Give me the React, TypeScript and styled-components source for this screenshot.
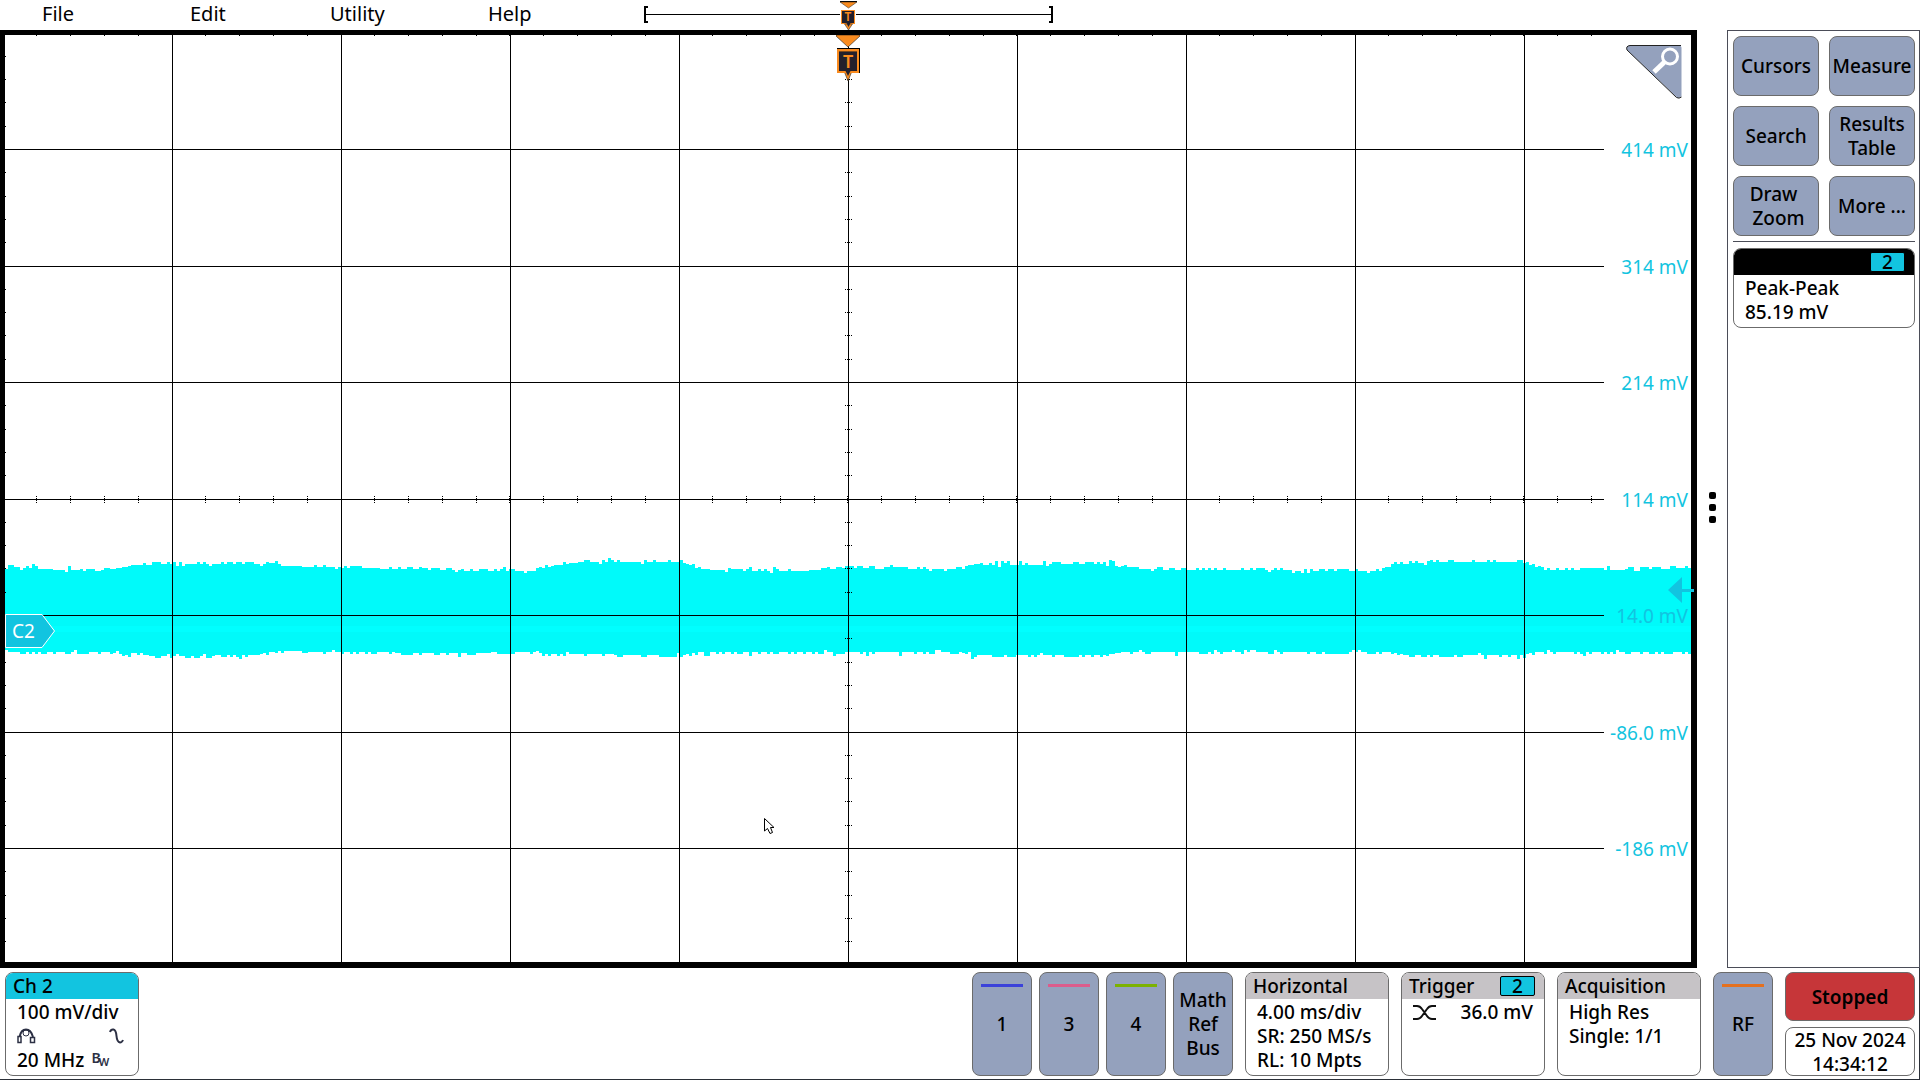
import React from "react";
import styled, { createGlobalStyle } from "styled-components";

const C = {
  channel2: "#12c4e0",
  button: "#94a1bd",
  outline: "#6b6b6b",
  header: "#c6c3c6",
  orange: "#f98b1f",
  ink: "#000000",
};

const GlobalStyle = createGlobalStyle`
  *, *::before, *::after { box-sizing: border-box; }
  body {
    margin: 0;
    background: #fff;
    color: ${C.ink};
    font-family: "Noto Sans", "Open Sans", sans-serif;
    font-size: 19px;
    font-weight: 500;
    line-height: 24px;
  }
  button { font: inherit; color: inherit; margin: 0; padding: 0; cursor: pointer; }
  p, h2 { margin: 0; font: inherit; }
  svg { display: block; }
`;

const Page = styled.div`
  display: grid;
  grid-template-rows: 30px 1fr auto;
  min-height: 100vh;
`;

const columns = "minmax(0, 1fr) 30px 193px";

const TopBar = styled.header`
  display: grid;
  grid-template-columns: ${columns};
`;

const TopMain = styled.div`
  display: grid;
  align-items: start;
  > * { grid-area: 1 / 1; }
`;

const Menu = styled.nav`
  display: flex;
  padding: 2px 0 0 28px;
`;

const MenuButton = styled.button<{ $width: number }>`
  width: ${(p) => p.$width}px;
  padding-left: 14px;
  border: 0;
  background: none;
  text-align: left;
  font-size: 20px;
  font-weight: 400;
  line-height: 24px;
`;

const Overview = styled.svg`
  justify-self: center;
`;

const Body = styled.main`
  display: grid;
  grid-template-columns: ${columns};
`;

const Plot = styled.section`
  position: relative;
  border: 5px solid #000;
  border-right-width: 6px;
  border-bottom-width: 6px;
  font-weight: 400;
`;

const Graticule = styled.svg`
  position: absolute;
  inset: 0;
  width: 100%;
  height: 100%;
`;

const ScaleLabel = styled.span<{ $top: number }>`
  position: absolute;
  right: 3px;
  top: ${(p) => p.$top}%;
  padding-top: 2px;
  transform: translateY(-50%);
  color: ${C.channel2};
`;

const TriggerMarker = styled.svg`
  position: absolute;
  top: 0;
  left: 50%;
  margin-left: -12px;
`;

const FlagLetter = styled.text<{ $size: number }>`
  fill: ${C.orange};
  font-size: ${(p) => p.$size}px;
  font-weight: 600;
  text-anchor: middle;
`;

const ZoomCorner = styled.button`
  position: absolute;
  top: 10px;
  right: 9px;
  border: 0;
  background: none;
`;

const ChannelTag = styled.div`
  position: absolute;
  left: 0;
  top: 64.3%;
  transform: translateY(-50%);
  display: grid;
  align-items: center;
  color: #fff;
  > * { grid-area: 1 / 1; }
  span { padding-left: 7px; }
`;

const LevelArrow = styled.svg`
  position: absolute;
  right: -3px;
  top: 59.9%;
  transform: translateY(-50%);
`;

const Pointer = styled.svg`
  position: absolute;
  left: 45%;
  top: 84.5%;
`;

const DragHandle = styled.button`
  display: flex;
  flex-direction: column;
  align-items: center;
  justify-content: center;
  gap: 5px;
  padding-top: 17px;
  border: 0;
  background: none;
`;

const Dot = styled.span`
  width: 7px;
  height: 7px;
  border-radius: 2px;
  background: #000;
`;

const Sidebar = styled.aside`
  padding: 5px 4px 5px 5px;
  border: 1px solid #4b4d58;
`;

const ButtonGrid = styled.div`
  display: grid;
  grid-template-columns: 1fr 1fr;
  gap: 10px;
  padding-bottom: 5px;
  border-bottom: 1px solid #4b4d58;
`;

const panel = `
  border: 1px solid ${C.outline};
  border-radius: 8px;
`;

const SideButton = styled.button`
  ${panel}
  height: 60px;
  background: ${C.button};
  white-space: pre;
  display: flex;
  align-items: center;
  justify-content: center;
`;

const Card = styled.section<{ $width?: number }>`
  ${panel}
  width: ${(p) => (p.$width ? `${p.$width}px` : "auto")};
  overflow: hidden;
  background: #fff;
`;

const MeasureCard = styled(Card)`
  height: 80px;
  margin-top: 6px;
`;

const CardHeader = styled.header<{ $color: string }>`
  display: flex;
  align-items: center;
  justify-content: space-between;
  height: 26px;
  padding: 0 9px 0 7px;
  background: ${(p) => p.$color};
`;

const Badge = styled.span`
  width: 35px;
  height: 20px;
  margin-left: auto;
  border: 1px solid #000;
  border-radius: 2px;
  background: ${C.channel2};
  line-height: 18px;
  text-align: center;
`;

const CardBody = styled.div`
  padding: 1px 11px 0;
`;

const Line = styled.p`
  display: flex;
  align-items: center;
  min-height: 24px;
  white-space: nowrap;
`;

const SpreadLine = styled(Line)`
  justify-content: space-between;
`;

const BandwidthMark = styled.span`
  display: flex;
  margin-left: 7px;
  color: #2c3044;
  font-size: 14px;
  font-weight: 600;
  line-height: 16px;
  sub { font-size: 11px; line-height: 16px; padding-top: 4px; margin-left: -2px; vertical-align: baseline; }
`;

const Footer = styled.footer`
  display: flex;
  justify-content: space-between;
  padding: 4px 4px 3px 5px;
  border-right: 1px solid #2b3038;
  border-bottom: 1px solid #2b3038;
`;

const Settings = styled.div`
  display: flex;
  gap: 12px;
  height: 104px;
`;

const SourceButtons = styled.div`
  display: flex;
  gap: 7px;
`;

const SourceButton = styled.button`
  ${panel}
  width: 60px;
  display: grid;
  grid-template-rows: 14px 1fr 14px;
  justify-items: center;
  align-items: center;
  background: ${C.button};
`;

const Stripe = styled.span<{ $color: string }>`
  align-self: end;
  width: 42px;
  height: 3px;
  background: ${(p) => p.$color};
`;

const SourceName = styled.span`
  grid-row: 2;
`;

const RunColumn = styled.div`
  display: grid;
  grid-template-rows: 49px 49px;
  gap: 6px;
  width: 130px;
`;

const StatusButton = styled.button`
  ${panel}
  background: #c63639;
  font-weight: 600;
`;

const Clock = styled.time`
  ${panel}
  display: block;
  text-align: center;
  white-space: nowrap;
`;

/* Envelope of the channel 2 trace, as [x, y] corner points. */
const TOP: [number, number][] = [
  [5, 567], [30, 568], [60, 570], [95, 571], [120, 568], [130, 565], [172, 564], [265, 564],
  [280, 566], [320, 567], [400, 569], [480, 571], [532, 571], [550, 566], [580, 562], [640, 562],
  [680, 562], [690, 565], [697, 569], [740, 571], [800, 571], [850, 568], [900, 569], [960, 569],
  [980, 565], [1110, 564], [1125, 569], [1200, 570], [1380, 571], [1395, 564], [1440, 562],
  [1520, 562], [1545, 570], [1600, 570], [1691, 568],
];
const BOTTOM: [number, number][] = [
  [5, 652], [110, 652], [125, 655], [172, 656], [255, 655], [275, 651], [340, 652], [450, 653],
  [530, 652], [545, 654], [680, 655], [700, 652], [850, 652], [960, 652], [970, 655], [1100, 655],
  [1125, 652], [1390, 652], [1405, 655], [1520, 655], [1535, 652], [1691, 652],
];

function levelAt(points: [number, number][], x: number) {
  for (let i = 1; i < points.length; i++) {
    const [x0, y0] = points[i - 1];
    const [x1, y1] = points[i];
    if (x <= x1) return y0 + ((y1 - y0) * (x - x0)) / (x1 - x0);
  }
  return points[points.length - 1][1];
}

function edge(points: [number, number][], seed: number, up: number) {
  let state = seed;
  const out: string[] = [];
  for (let x = 5; x < 1691; x += 3) {
    state = (state * 16807) % 2147483647;
    const r = state / 2147483647;
    const noise = r > 0.98 ? 4 : r > 0.64 ? 2 : r < 0.04 ? -2 : 0;
    const y = Math.round(levelAt(points, x) + up * noise);
    out.push(`${x} ${y}`, `${Math.min(x + 3, 1691)} ${y}`);
  }
  return out;
}

const TRACE = `M${edge(TOP, 4211, -1).join("L")}L${edge(BOTTOM, 977, 1).reverse().join("L")}Z`;

const verticals = [172, 341, 510, 679, 848, 1017, 1186, 1355, 1524];
const horizontals = [149, 266, 382, 499, 615, 732, 848];
const minorX = Array.from({ length: 49 }, (_, i) => Math.floor(3 + 33.8 * (i + 1)));
const minorY = Array.from({ length: 39 }, (_, i) => Math.floor(33 + 23.3 * (i + 1)));

function Grid() {
  return (
    <Graticule viewBox="5 35 1686 927" preserveAspectRatio="none" aria-hidden="true">
      <path d={TRACE} fill="#00fafa" />
      <rect x="5" y="626" width="1686" height="6" fill="#00ffff" />
      <g fill="#000" shapeRendering="crispEdges">
        {verticals.map((x) => (
          <rect key={x} x={x} y="35" width="1" height="927" />
        ))}
        {horizontals.map((y) => (
          <rect key={y} x="5" y={y} width="1599" height="1" />
        ))}
        {minorX.filter((x) => x < 1604).map((x) => (
          <path key={x} d={`M${x} 35h1v1h-1zM${x} 496h1v1h-1zM${x} 498h1v3h-1zM${x} 502h1v1h-1z`} />
        ))}
        {minorY.map((y) => (
          <path key={y} d={`M5 ${y}h1v1h-1zM845 ${y}h1v1h-1zM847 ${y}h3v1h-3zM851 ${y}h1v1h-1z`} />
        ))}
      </g>
    </Graticule>
  );
}

const labels: [string, number][] = [
  ["414 mV", 149], ["314 mV", 266], ["214 mV", 382], ["114 mV", 499],
  ["14.0 mV", 615], ["-86.0 mV", 732], ["-186 mV", 848],
];

function TimeOverview() {
  return (
    <Overview width="409" height="30" viewBox="0 0 409 30" aria-hidden="true">
      <g shapeRendering="crispEdges">
        <path d="M0 6h4v2h-2v13h2v2h-4zM409 6h-4v2h2v13h-2v2h4z" />
        <path d="M2 14h194v1h-194zM212 14h195v1h-195z" />
        <path d="M196 1h17v1h-17z" />
        <path d="M197 10h14v14h-14z" fill={C.orange} />
        <path d="M198 11h12v12h-12z" fill="#221f2b" />
      </g>
      <FlagLetter x="204" y="21" $size={12}>T</FlagLetter>
      <path d="M196 2h17l-8.500 6z" fill={C.orange} stroke="#222" strokeWidth=".5" />
      <path d="M200.500 24h8l-4 6z" fill={C.orange} stroke="#222" strokeWidth=".5" />
      <path d="M202.500 23h4l-2 4z" fill="#221f2b" />
    </Overview>
  );
}

function TriggerFlag() {
  return (
    <TriggerMarker width="24" height="47" viewBox="0 0 24 47" aria-hidden="true">
      <path d="M0 0h24v1L12 12L0 1z" fill={C.orange} stroke="#222" strokeWidth=".6" />
      <path d="M8 36l4 10l4-10z" fill={C.orange} stroke="#222" strokeWidth=".6" />
      <g shapeRendering="crispEdges">
        <path d="M1 13h23v25h-1v-24h-22z" />
        <path d="M1 14h22v24h-22z" fill={C.orange} />
        <path d="M3 16h18v20h-18z" fill="#221f2b" />
        <path d="M3 16h18v1h-18z" fill="#7c4a1e" />
      </g>
      <FlagLetter x="12" y="33" $size={18}>T</FlagLetter>
      <path d="M9.500 36l2.500 5l2.500-5z" fill="#221f2b" />
    </TriggerMarker>
  );
}

export default function App() {
  return (
    <>
      <GlobalStyle />
      <Page>
        <TopBar>
          <TopMain>
            <Menu>
              <MenuButton $width={148}>File</MenuButton>
              <MenuButton $width={140}>Edit</MenuButton>
              <MenuButton $width={158}>Utility</MenuButton>
              <MenuButton $width={80}>Help</MenuButton>
            </Menu>
            <TimeOverview />
          </TopMain>
        </TopBar>

        <Body>
          <Plot aria-label="Waveform view">
            <Grid />
            {labels.map(([text, y]) => (
              <ScaleLabel key={text} $top={((y - 35) / 927) * 100}>{text}</ScaleLabel>
            ))}
            <TriggerFlag />
            <ZoomCorner aria-label="Zoom">
              <svg width="56" height="54" viewBox="0 0 56 54">
                <path d="M4 .5H53q2.500 0 2.500 2.500V51q-2 3-4.500 1.500L1 5Q-.5 1 4 .5z" fill={C.button} />
                <path d="M55 .5H4Q-.5 1 1 5L50.500 52.500Q53 54 55.500 52" fill="none" stroke="#222" />
                <circle cx="44" cy="11.500" r="7.500" fill="none" stroke="#fff" strokeWidth="3" />
                <path d="M38.500 17L28 27" stroke="#fff" strokeWidth="5" />
              </svg>
            </ZoomCorner>
            <LevelArrow width="26" height="26" viewBox="0 0 26 26" aria-hidden="true">
              <path d="M0 13L14 0V12H26V15H14V26z" fill={C.channel2} />
            </LevelArrow>
            <ChannelTag>
              <svg width="51" height="34" viewBox="0 0 51 34" aria-hidden="true">
                <path d="M.5 .5H37L49.500 17L37 33.500H.5z" fill={C.channel2} stroke="#fff" />
              </svg>
              <span>C2</span>
            </ChannelTag>
            <Pointer width="12" height="17" viewBox="0 0 12 17" aria-hidden="true">
              <path d="M.5 .5V13L3.500 10.500L6 15.500L8.500 14.500L6.500 9.500H10z" fill="#fff" stroke="#000" />
            </Pointer>
          </Plot>

          <DragHandle aria-label="Resize results bar">
            <Dot /><Dot /><Dot />
          </DragHandle>

          <Sidebar>
            <ButtonGrid>
              <SideButton>Cursors</SideButton>
              <SideButton>Measure</SideButton>
              <SideButton>Search</SideButton>
              <SideButton>{"Results\nTable"}</SideButton>
              <SideButton>{"Draw \n Zoom"}</SideButton>
              <SideButton>More ...</SideButton>
            </ButtonGrid>
            <MeasureCard>
              <CardHeader $color="#000000"><Badge>2</Badge></CardHeader>
              <CardBody>
                <Line>Peak-Peak</Line>
                <Line>85.19 mV</Line>
              </CardBody>
            </MeasureCard>
          </Sidebar>
        </Body>

        <Footer>
          <Settings>
            <Card $width={134}>
              <CardHeader $color={C.channel2}><h2>Ch 2</h2></CardHeader>
              <CardBody>
                <Line>100 mV/div</Line>
                <SpreadLine>
                  <svg width="19" height="16" viewBox="0 0 19 16" fill="none" stroke="#2c3044" strokeWidth="2" aria-hidden="true">
                    <path d="M2.500 9Q4 1.500 9 1.500Q14 1.500 16 9" />
                    <circle cx="9" cy="5" r="3" strokeWidth="1" />
                    <path d="M1 8.500h3v6h-3zM13.500 9.500h4v5h-4z" strokeWidth="1.500" />
                  </svg>
                  <svg width="18" height="16" viewBox="0 0 18 16" fill="none" stroke="#2c3044" strokeWidth="2" aria-hidden="true">
                    <path d="M1 4Q2 1 4.500 1.500Q7 2 7.500 8Q8 14 11 14.500Q13 14.500 14 12" />
                  </svg>
                </SpreadLine>
                <Line>20 MHz <BandwidthMark>B<sub>W</sub></BandwidthMark></Line>
              </CardBody>
            </Card>
          </Settings>

          <Settings>
            <SourceButtons>
              <SourceButton><Stripe $color="#3b42da" /><SourceName>1</SourceName></SourceButton>
              <SourceButton><Stripe $color="#dc5c8c" /><SourceName>3</SourceName></SourceButton>
              <SourceButton><Stripe $color="#7cb200" /><SourceName>4</SourceName></SourceButton>
              <SourceButton><SourceName>Math<br />Ref<br />Bus</SourceName></SourceButton>
            </SourceButtons>
            <Card $width={144}>
              <CardHeader $color={C.header}><h2>Horizontal</h2></CardHeader>
              <CardBody>
                <Line>4.00 ms/div</Line>
                <Line>SR: 250 MS/s</Line>
                <Line>RL: 10 Mpts</Line>
              </CardBody>
            </Card>
            <Card $width={144}>
              <CardHeader $color={C.header}><h2>Trigger</h2><Badge>2</Badge></CardHeader>
              <CardBody>
                <SpreadLine>
                  <svg width="23" height="15" viewBox="0 0 23 15" fill="none" stroke="#101010" strokeWidth="2" aria-label="Either edge">
                    <path d="M0 1H4Q7 1 9 4L14 11Q16 14 19 14H23M0 14H4Q7 14 9 11L14 4Q16 1 19 1H23" />
                  </svg>
                  <span>36.0 mV</span>
                </SpreadLine>
              </CardBody>
            </Card>
            <Card $width={144}>
              <CardHeader $color={C.header}><h2>Acquisition</h2></CardHeader>
              <CardBody>
                <Line>High Res</Line>
                <Line>Single: 1/1</Line>
              </CardBody>
            </Card>
            <SourceButton><Stripe $color="#e4701e" /><SourceName>RF</SourceName></SourceButton>
            <RunColumn>
              <StatusButton>Stopped</StatusButton>
              <Clock>25 Nov 2024<br />14:34:12</Clock>
            </RunColumn>
          </Settings>
        </Footer>
      </Page>
    </>
  );
}
